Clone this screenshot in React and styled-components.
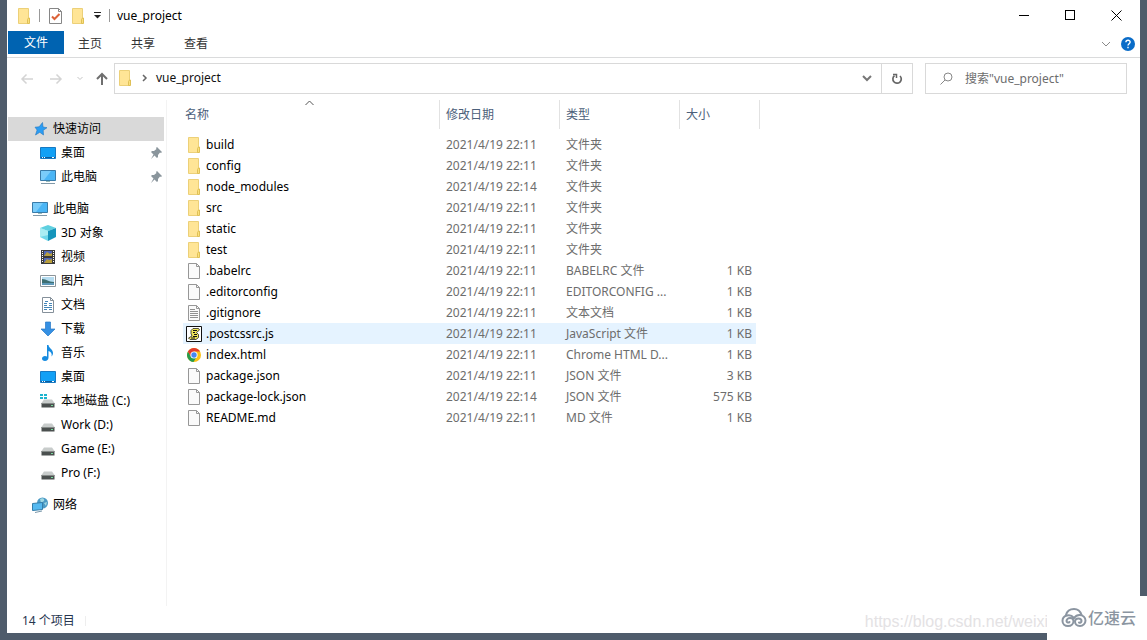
import React from 'react';
import styled, { createGlobalStyle, css } from 'styled-components';

const GlobalStyle = createGlobalStyle`
  *, *::before, *::after { box-sizing: border-box; }
  body {
    margin: 0;
    background: #4f5c6b;
    color: #000;
    font: 12px/16px 'Noto Sans', 'Noto Sans CJK SC', sans-serif;
  }
  button, input { font: inherit; color: inherit; }
  svg { display: block; flex: none; }
`;

const Desktop = styled.div`
  position: relative;
  display: flex;
  min-height: 100vh;
  padding: 0 7px 7px;
  overflow: hidden;
`;

const Window = styled.div`
  flex: 1;
  min-width: 0;
  display: flex;
  flex-direction: column;
  background: #fff;
`;

const PlainButton = styled.button`
  display: flex;
  align-items: center;
  justify-content: center;
  padding: 0;
  border: 0;
  background: none;
`;

const TitleBar = styled.header`
  display: flex;
  align-items: center;
  height: 31px;
  padding: 0 1px 0 9px;
`;

const QuickTools = styled.div`
  display: flex;
  align-items: center;
  gap: 7px;
  margin-right: 7px;
`;

const Separator = styled.span`
  width: 1px;
  height: 13px;
  background: #999;
`;

const Title = styled.h1`
  flex: 1;
  margin: 0;
  font-size: 12px;
  font-weight: 400;
`;

const CaptionButton = styled(PlainButton)`
  width: 46px;
  height: 31px;
`;

const TabBar = styled.nav`
  display: flex;
  align-items: center;
  height: 27px;
  padding: 0 5px 4px 1px;
  border-bottom: 1px solid #dadbdc;
`;

const Tab = styled(PlainButton)`
  width: ${(p) => (p.$primary ? 56 : 53)}px;
  height: 23px;
  padding: ${(p) => (p.$primary ? '2px 0 0' : '3px 1px 0 0')};
  background: ${(p) => (p.$primary ? '#0063b1' : 'none')};
  color: ${(p) => (p.$primary ? '#fff' : '#333')};
`;

const TabTools = styled.div`
  display: flex;
  align-items: center;
  gap: 10px;
  margin-left: auto;
  padding-top: 4px;
`;

const AddressRow = styled.div`
  display: flex;
  align-items: center;
  gap: 12px;
  padding: 5px 13px 6px 12px;
`;

const NavButtons = styled.div`
  display: flex;
  align-items: center;
  gap: 13px;
  margin-right: -6px;
`;

const AddressBox = styled.div`
  flex: 1;
  display: flex;
  height: 31px;
  border: 1px solid #d9d9d9;
`;

const Crumbs = styled.div`
  flex: 1;
  display: flex;
  align-items: center;
  gap: 8px;
  padding: 0 8px 2px 2px;
`;

const Crumb = styled.a`
  color: #111;
  text-decoration: none;
`;

const HistoryButton = styled(PlainButton)`
  margin-left: auto;
`;

const RefreshButton = styled(PlainButton)`
  width: 31px;
  border-left: 1px solid #d9d9d9;
`;

const SearchBox = styled.label`
  display: flex;
  align-items: center;
  gap: 12px;
  width: 202px;
  height: 31px;
  padding-left: 14px;
  border: 1px solid #d9d9d9;
`;

const SearchInput = styled.input`
  flex: 1;
  min-width: 0;
  padding: 0;
  border: 0;
  outline: 0;
  background: none;
  &::placeholder { color: #6d6d6d; opacity: 1; }
`;

const Body = styled.div`
  flex: 1;
  display: flex;
`;

const Sidebar = styled.nav`
  width: 160px;
  padding: 17px 2px 0 1px;
  border-right: 1px solid #f3f3f3;
`;

const TreeList = styled.ul`
  margin: 0 0 8px;
  padding: 0;
  list-style: none;
`;

const TreeItem = styled(PlainButton)`
  width: 100%;
  height: 24px;
  justify-content: flex-start;
  gap: 5px;
  padding: 0 2px 0 ${(p) => (p.$root ? 24 : 32)}px;
  background: ${(p) => (p.$selected ? '#d9d9d9' : 'none')};
`;

const PinSlot = styled.span`
  margin-left: auto;
`;

const FilePane = styled.main`
  flex: 1;
  padding-left: 16px;
`;

const FileTable = styled.table`
  width: 577px;
  table-layout: fixed;
  border-collapse: separate;
  border-spacing: 0;
`;

const Column = styled.col`
  width: ${(p) => p.$width}px;
`;

const HeadCell = styled.th`
  position: relative;
  height: 29px;
  padding: 0 0 0 ${(p) => (p.$first ? 2 : 6)}px;
  border-right: 1px solid #e2e2e2;
  color: #4c607a;
  font-weight: 400;
  text-align: left;
`;

const SortMark = styled.span`
  position: absolute;
  top: 0;
  left: 0;
  right: 4px;
  display: flex;
  justify-content: center;
`;

const Spacer = styled.tbody`
  td { height: 5px; padding: 0; }
`;

const Cell = styled.td`
  height: 21px;
  padding: 0 0 0 6px;
  color: #6d6d6d;
  white-space: nowrap;
  ${(p) => p.$size && css`
    padding-right: 4px;
    border-right: 4px solid transparent;
    background-clip: padding-box;
    text-align: right;
  `}
`;

const NameCell = styled(Cell)`
  padding-left: 3px;
  color: #000;
`;

const FileName = styled.span`
  display: flex;
  align-items: center;
  gap: 4px;
`;

const Row = styled.tr`
  ${Cell} { background-color: ${(p) => (p.$hover ? '#e5f3ff' : 'transparent')}; }
`;

const StatusBar = styled.footer`
  display: flex;
  align-items: center;
  gap: 10px;
  height: 27px;
  padding: 2px 0 0 15px;
  color: #26354f;
`;

const StatusDivider = styled.span`
  width: 1px;
  height: 10px;
  background: #eee;
`;

const BlogMark = styled.span`
  position: absolute;
  right: 99px;
  bottom: 9px;
  color: #e4e2e4;
  font: 16px/18px 'Liberation Sans', sans-serif;
`;

const BrandMark = styled.div`
  position: absolute;
  right: 0;
  bottom: 0;
  display: flex;
  align-items: center;
  gap: 1px;
  width: 100px;
  height: 44px;
  padding-left: 14px;
  background: #fff;
  color: #8b95a1;
  font-size: 16px;
  font-weight: 500;
`;

const FolderIcon = () => (
  <svg width="16" height="16" viewBox="0 0 16 16">
    <path d="M2.500.5h10v15h-10z" fill="#ffe596" stroke="#ecd078" />
    <path d="M11.500 15.500v-4l1-1.500h1v5.500z" fill="#fbe07c" stroke="#dfc057" />
  </svg>
);

const PageIcon = ({ lines }) => (
  <svg width="16" height="16" viewBox="0 0 16 16">
    <path d="M2.500.5h8l3 3v12h-11z" fill="#fafafa" stroke="#979797" />
    <path d="M10.500.5v3h3" fill="none" stroke="#979797" />
    {lines && <path d="M4 4.500h5M4 6.500h8M4 8.500h8M4 10.500h8M4 12.500h8" stroke="#909090" />}
  </svg>
);

const ScriptIcon = () => (
  <svg width="16" height="16" viewBox="0 0 16 16">
    <path d="M.5.5h15v15H.5z" fill="#fff" stroke="#111" />
    <path d="M5 4.500 7 2.500h5.500l1 1.500-3 2.500 2 2v3L10 13.500H4L2.500 12 6 10 5 7.500z" fill="#efe65a" stroke="#222" strokeWidth=".8" />
    <path d="M7 4.500h4M7 6.500h2M8 8.500h3M7 10.500h4M5 12h4" stroke="#111" />
  </svg>
);

const ChromeIcon = () => (
  <svg width="16" height="16" viewBox="0 0 16 16">
    <circle cx="8" cy="8" r="7" fill="#fbc116" />
    <path d="M1.940 4.500A7 7 0 0 0 7.500 15l3.300-5.500L8 8 5 9.500z" fill="#279b4d" />
    <path d="M1.940 4.500A7 7 0 0 1 14.060 4.500H8L5 9.500z" fill="#e33b2e" />
    <circle cx="8" cy="8" r="3.600" fill="#fff" />
    <circle cx="8" cy="8" r="2.700" fill="#4587f3" />
  </svg>
);

const StarIcon = () => (
  <svg width="16" height="16" viewBox="0 0 16 16">
    <path d="m10.500 1.500.5 4.500 4 .7-3.800 2.600.3 4.700-3.700-2.700L3.500 14l1.600-5L3 6.200l4.200-.4z" fill="#2a9df4" stroke="#2276bd" strokeWidth=".6" />
  </svg>
);

const DesktopIcon = () => (
  <svg width="16" height="16" viewBox="0 0 16 16">
    <path d="M.5 2.500h15v11H.5z" fill="#12a0f5" stroke="#1779c2" />
    <path d="M1 12.500h14" stroke="#0c5b9b" />
    <path d="M2 12.500h1m1 0h1m7 0h2" stroke="#fff" />
  </svg>
);

const ComputerIcon = () => (
  <svg width="16" height="16" viewBox="0 0 16 16">
    <path d="M.5 1.500h15v10H.5z" fill="#4ab5f5" stroke="#397ba8" />
    <path d="M1 2h10L4 11H1z" fill="#7accf9" />
    <path d="M6 12h4v1H6z" fill="#9bb" />
    <path d="M1 14.500h14" stroke="#8199a8" />
  </svg>
);

const CubeIcon = () => (
  <svg width="16" height="16" viewBox="0 0 16 16">
    <path d="m8 0 8 3-8 3-8-3z" fill="#5fd0e0" />
    <path d="m0 3 8 3v10l-8-4z" fill="#6fd8ea" />
    <path d="m16 3-8 3v10l8-4z" fill="#1595bb" />
    <path d="m0 3 8 3v4l-8 2z" fill="#a9edf3" />
  </svg>
);

const FilmIcon = () => (
  <svg width="16" height="16" viewBox="0 0 16 16">
    <path d="M1 1h14v14H1z" fill="#3b3b3b" />
    <path d="M2.500 2v12M13.500 2v12" stroke="#fff" strokeDasharray="1 1" />
    <path d="M4 2h8v5H4zM4 9h8v5H4z" fill="#5268b8" />
    <path d="m4 7 3-4 3 2 2-1v3zM4 14l3-4 2 1 3-1v4z" fill="#b99f3d" />
  </svg>
);

const PictureIcon = () => (
  <svg width="16" height="16" viewBox="0 0 16 16">
    <path d="M.5 2.500h15v11H.5z" fill="#fff" stroke="#8c9499" />
    <path d="M2 4h12v8H2z" fill="#b5dcf0" />
    <path d="M2 6c5 0 6 3 12 3v2H2z" fill="#3e6f72" />
    <path d="M2 10h12v2H2z" fill="#5f99b9" />
  </svg>
);

const DocumentIcon = () => (
  <svg width="16" height="16" viewBox="0 0 16 16">
    <path d="M2.500.5h8l3 3v12h-11z" fill="#fff" stroke="#85909a" />
    <path d="M10.500.5v3h3" fill="none" stroke="#85909a" />
    <path d="M5 4.500h3M4 6.500h3m2 0h3M4 8.500h3m2 0h3M4 10.500h8M4 12.500h3m2 0h3" stroke="#4586b8" />
  </svg>
);

const DownloadIcon = () => (
  <svg width="16" height="16" viewBox="0 0 16 16">
    <path d="M5.500 1h5v7H15l-7 7-7-7h4.500z" fill="#3590e3" stroke="#2778c5" strokeWidth=".7" />
  </svg>
);

const MusicIcon = () => (
  <svg width="16" height="16" viewBox="0 0 16 16">
    <path d="M7 0h1.500c0 3 4.500 4 4.500 8 0 1.500-.6 2.500-1.500 3.500.8-3-.5-4.500-3-5.500v6.500C8.500 14.500 7 16 5 16s-3-1-3-2.500S3.500 11 5 11q1 0 2 .4z" fill="#168be0" />
  </svg>
);

const DriveIcon = ({ system }) => (
  <svg width="16" height="16" viewBox="0 0 16 16">
    <path d="M4 6.500h8l2.500 3.500h-13z" fill="#c8cccb" />
    <path d="M1.500 10h13v4.500h-13z" fill="#4b504f" />
    <path d="M1.500 10.500h13" stroke="#858a88" />
    <path d="M11 12.500h2" stroke="#77d99b" />
    {system && <path d="M0 1h3v2H0zm4 0h3v2H4zM0 4h3v2H0zm4 0h3v2H4z" fill="#1db4cf" />}
  </svg>
);

const NetworkIcon = () => (
  <svg width="16" height="16" viewBox="0 0 16 16">
    <circle cx="10.500" cy="6" r="5.500" fill="#4b9ac5" />
    <path d="M8 2c3-2 5 0 4 2L9 6zM12 6l3-1-1 4z" fill="#a0d8e3" />
    <path d="m.5 6.500 10-1v7l-10 1z" fill="#55b9f0" stroke="#347da9" />
    <path d="M3 15.500 10 14" stroke="#7896a8" />
  </svg>
);

const PinIcon = () => (
  <svg width="11" height="12" viewBox="0 0 11 12">
    <path d="m6 0 5 5-1 1-1-.5L7 8v2L6 11 3.500 8.500 0 12l2.500-4.500L0 5l1-1h2L5.500 2 5 1z" fill="#8a959c" />
  </svg>
);

const Stroke = ({ w, h, d, color, width = 1, crisp }) => (
  <svg width={w} height={h} viewBox={`0 0 ${w} ${h}`}>
    <path d={d} fill="none" stroke={color} strokeWidth={width} shapeRendering={crisp ? 'crispEdges' : 'auto'} />
  </svg>
);

const CheckPageIcon = () => (
  <svg width="16" height="16" viewBox="0 0 16 16">
    <path d="M2.500.5h9l3 3v12h-12z" fill="#fff" stroke="#868686" />
    <path d="M11.500.5v3h3" fill="none" stroke="#868686" />
    <path d="m5 8.500 2.500 2.500 5-5" fill="none" stroke="#dc6238" strokeWidth="2" />
  </svg>
);

const MenuMark = () => (
  <svg width="9" height="7" viewBox="0 0 9 7">
    <path d="M1 .5h7" stroke="#222" />
    <path d="M1 3h7L4.500 6.500z" fill="#222" />
  </svg>
);

const HelpIcon = () => (
  <svg width="14" height="14" viewBox="0 0 14 14">
    <circle cx="7" cy="7" r="7" fill="#0a6cc8" />
    <path d="M4.900 5.300C5 2.600 9.200 2.700 9.100 5.200 9 6.700 7 6.800 7 8.500M7 9.700v1.500" fill="none" stroke="#fff" strokeWidth="1.400" />
  </svg>
);

const RefreshIcon = () => (
  <svg width="12" height="12" viewBox="0 0 12 12">
    <path d="M9 3a4.200 4.200 0 1 1-5.500-.3" fill="none" stroke="#666" strokeWidth="1.700" />
    <path d="M2 1.500h3.500V5" fill="none" stroke="#666" strokeWidth="1.500" />
  </svg>
);

const SearchIcon = () => (
  <svg width="13" height="13" viewBox="0 0 13 13">
    <circle cx="8" cy="5" r="4" fill="none" stroke="#888" />
    <path d="M5 8 .5 12.500" stroke="#888" />
  </svg>
);

const CloudLogo = () => (
  <svg width="26" height="20" viewBox="0 0 26 20">
    <g fill="none" stroke="#8b95a1" strokeWidth="2" strokeLinecap="round">
      <path d="M5 7C6 3 9 1 13 1s6.500 2.500 7.500 6" />
      <path d="M13 10C10.500 7 7.500 7 6 7.500 3.500 8 1.500 10 1.500 13c0 3 2.500 5 5.500 5 3.500 0 5.500-2.500 5.500-5 0-1.500-1.500-3-3.500-3s-3.500 1.500-3.500 3 2 2 3 1" />
      <path d="M13 10c1.500-2 3-3 5.500-3 3.500 0 6 2.500 6 5.500S22 18 19 18c-3.500 0-5-2.500-5-4.500 0-2 1.500-3 3.500-3s3 1 3 2.500-1.500 2-2.500 1.500" />
    </g>
  </svg>
);

const PINNED = [
  { label: '快速访问', icon: StarIcon, root: true, selected: true },
  { label: '桌面', icon: DesktopIcon, pin: true },
  { label: '此电脑', icon: ComputerIcon, pin: true },
];

const COMPUTER = [
  { label: '此电脑', icon: ComputerIcon, root: true },
  { label: '3D 对象', icon: CubeIcon },
  { label: '视频', icon: FilmIcon },
  { label: '图片', icon: PictureIcon },
  { label: '文档', icon: DocumentIcon },
  { label: '下载', icon: DownloadIcon },
  { label: '音乐', icon: MusicIcon },
  { label: '桌面', icon: DesktopIcon },
  { label: '本地磁盘 (C:)', icon: () => <DriveIcon system /> },
  { label: 'Work (D:)', icon: DriveIcon },
  { label: 'Game (E:)', icon: DriveIcon },
  { label: 'Pro (F:)', icon: DriveIcon },
];

const NETWORK = [{ label: '网络', icon: NetworkIcon, root: true }];

const TextPageIcon = () => <PageIcon lines />;

const FILES = [
  ['build', '22:11', '文件夹', '', FolderIcon],
  ['config', '22:11', '文件夹', '', FolderIcon],
  ['node_modules', '22:14', '文件夹', '', FolderIcon],
  ['src', '22:11', '文件夹', '', FolderIcon],
  ['static', '22:11', '文件夹', '', FolderIcon],
  ['test', '22:11', '文件夹', '', FolderIcon],
  ['.babelrc', '22:11', 'BABELRC 文件', '1 KB', PageIcon],
  ['.editorconfig', '22:11', 'EDITORCONFIG ...', '1 KB', PageIcon],
  ['.gitignore', '22:11', '文本文档', '1 KB', TextPageIcon],
  ['.postcssrc.js', '22:11', 'JavaScript 文件', '1 KB', ScriptIcon],
  ['index.html', '22:11', 'Chrome HTML D...', '1 KB', ChromeIcon],
  ['package.json', '22:11', 'JSON 文件', '3 KB', PageIcon],
  ['package-lock.json', '22:14', 'JSON 文件', '575 KB', PageIcon],
  ['README.md', '22:11', 'MD 文件', '1 KB', PageIcon],
];

const Tree = ({ items }) => (
  <TreeList>
    {items.map(({ label, icon: Icon, root, selected, pin }) => (
      <li key={label}>
        <TreeItem type="button" $root={root} $selected={selected}>
          <Icon />
          {label}
          {pin && <PinSlot><PinIcon /></PinSlot>}
        </TreeItem>
      </li>
    ))}
  </TreeList>
);

export default function App() {
  return (
    <Desktop>
      <GlobalStyle />
      <Window>
        <TitleBar>
          <QuickTools>
            <FolderIcon />
            <Separator />
            <PlainButton type="button" aria-label="属性"><CheckPageIcon /></PlainButton>
            <PlainButton type="button" aria-label="新建文件夹"><FolderIcon /></PlainButton>
            <PlainButton type="button" aria-label="自定义"><MenuMark /></PlainButton>
            <Separator />
          </QuickTools>
          <Title>vue_project</Title>
          <CaptionButton type="button" aria-label="最小化"><Stroke w={11} h={11} d="M0 5.500h10" color="#000" crisp /></CaptionButton>
          <CaptionButton type="button" aria-label="最大化"><Stroke w={11} h={11} d="M.5.5h9v9h-9z" color="#000" crisp /></CaptionButton>
          <CaptionButton type="button" aria-label="关闭"><Stroke w={11} h={11} d="m.5.5 10 10m0-10-10 10" color="#000" /></CaptionButton>
        </TitleBar>

        <TabBar>
          <Tab type="button" $primary>文件</Tab>
          <Tab type="button">主页</Tab>
          <Tab type="button">共享</Tab>
          <Tab type="button">查看</Tab>
          <TabTools>
            <PlainButton type="button" aria-label="展开功能区"><Stroke w={10} h={6} d="m1 1 4 4 4-4" color="#8a8a8a" /></PlainButton>
            <PlainButton type="button" aria-label="帮助"><HelpIcon /></PlainButton>
          </TabTools>
        </TabBar>

        <AddressRow>
          <NavButtons>
            <PlainButton type="button" aria-label="后退"><Stroke w={16} h={12} d="M14 6H3m4.500-4.500L3 6l4.500 4.500" color="#d4d4d4" width={1.5} /></PlainButton>
            <PlainButton type="button" aria-label="前进"><Stroke w={16} h={12} d="M2 6h11M8.500 1.500 13 6l-4.500 4.500" color="#d4d4d4" width={1.5} /></PlainButton>
            <PlainButton type="button" aria-label="最近位置"><Stroke w={6} h={5} d="m.5 1 2.500 2.500L5.500 1" color="#c4c4c4" /></PlainButton>
            <PlainButton type="button" aria-label="向上"><Stroke w={12} h={13} d="M6 13V2M1 7l5-5 5 5" color="#6f6f6f" width={2} /></PlainButton>
          </NavButtons>
          <AddressBox>
            <Crumbs>
              <FolderIcon />
              <Stroke w={7} h={8} d="m2 1 3 3-3 3" color="#666" width={1.5} />
              <Crumb href="#">vue_project</Crumb>
              <HistoryButton type="button" aria-label="历史记录"><Stroke w={12} h={8} d="m2 2 4 4 4-4" color="#777" width={2} /></HistoryButton>
            </Crumbs>
            <RefreshButton type="button" aria-label="刷新"><RefreshIcon /></RefreshButton>
          </AddressBox>
          <SearchBox>
            <SearchIcon />
            <SearchInput type="text" aria-label="搜索" placeholder={'搜索"vue_project"'} />
          </SearchBox>
        </AddressRow>

        <Body>
          <Sidebar>
            <Tree items={PINNED} />
            <Tree items={COMPUTER} />
            <Tree items={NETWORK} />
          </Sidebar>
          <FilePane>
            <FileTable>
              <colgroup>
                <Column $width={257} />
                <Column $width={120} />
                <Column $width={120} />
                <Column $width={80} />
              </colgroup>
              <thead>
                <tr>
                  <HeadCell $first>
                    名称
                    <SortMark><Stroke w={9} h={6} d="m.5 5 4-4 4 4" color="#555" /></SortMark>
                  </HeadCell>
                  <HeadCell>修改日期</HeadCell>
                  <HeadCell>类型</HeadCell>
                  <HeadCell>大小</HeadCell>
                </tr>
              </thead>
              <Spacer><tr><td colSpan={4} /></tr></Spacer>
              <tbody>
                {FILES.map(([name, time, type, size, Icon]) => (
                  <Row key={name} $hover={name === '.postcssrc.js'}>
                    <NameCell><FileName><Icon />{name}</FileName></NameCell>
                    <Cell>2021/4/19 {time}</Cell>
                    <Cell>{type}</Cell>
                    <Cell $size>{size}</Cell>
                  </Row>
                ))}
              </tbody>
            </FileTable>
          </FilePane>
        </Body>

        <StatusBar>
          14 个项目
          <StatusDivider />
        </StatusBar>
      </Window>
      <BlogMark>https://blog.csdn.net/weixi</BlogMark>
      <BrandMark><CloudLogo />亿速云</BrandMark>
    </Desktop>
  );
}
